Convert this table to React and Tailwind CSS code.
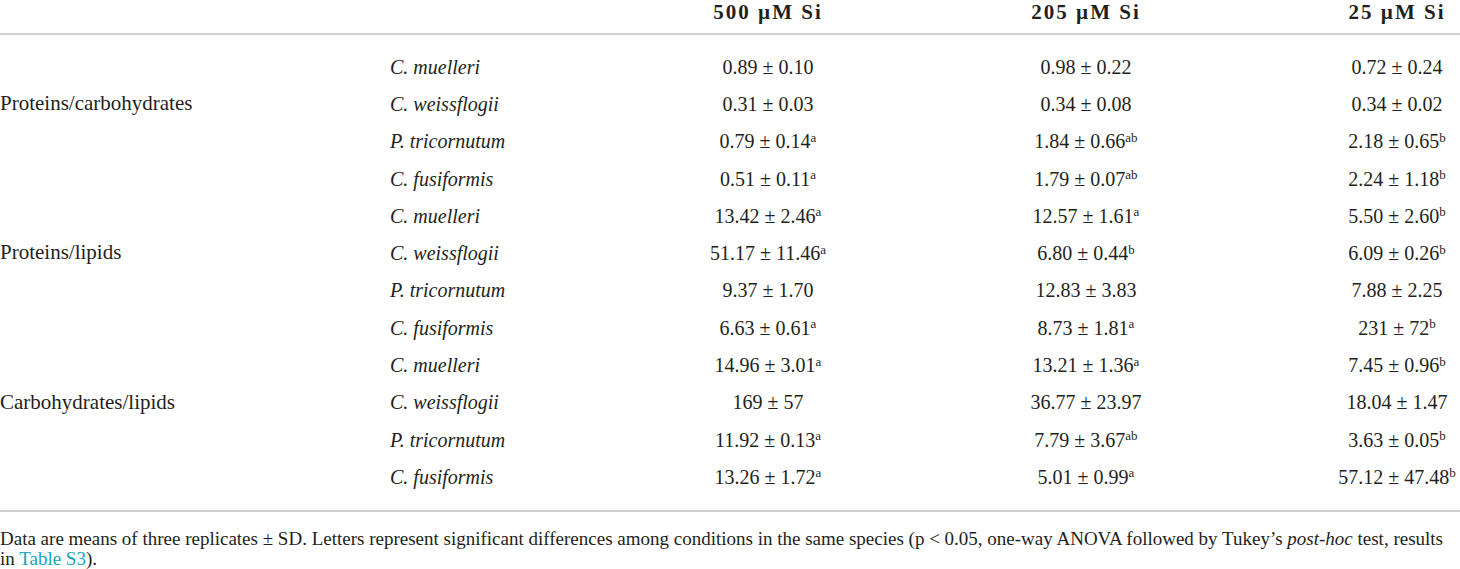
import React from 'react';

const rows = [
  { label: '', species: 'C. muelleri', v: [['0.89 ± 0.10'], ['0.98 ± 0.22'], ['0.72 ± 0.24']] },
  { label: 'Proteins/carbohydrates', species: 'C. weissflogii', v: [['0.31 ± 0.03'], ['0.34 ± 0.08'], ['0.34 ± 0.02']] },
  { label: '', species: 'P. tricornutum', v: [['0.79 ± 0.14', 'a'], ['1.84 ± 0.66', 'ab'], ['2.18 ± 0.65', 'b']] },
  { label: '', species: 'C. fusiformis', v: [['0.51 ± 0.11', 'a'], ['1.79 ± 0.07', 'ab'], ['2.24 ± 1.18', 'b']] },
  { label: '', species: 'C. muelleri', v: [['13.42 ± 2.46', 'a'], ['12.57 ± 1.61', 'a'], ['5.50 ± 2.60', 'b']] },
  { label: 'Proteins/lipids', species: 'C. weissflogii', v: [['51.17 ± 11.46', 'a'], ['6.80 ± 0.44', 'b'], ['6.09 ± 0.26', 'b']] },
  { label: '', species: 'P. tricornutum', v: [['9.37 ± 1.70'], ['12.83 ± 3.83'], ['7.88 ± 2.25']] },
  { label: '', species: 'C. fusiformis', v: [['6.63 ± 0.61', 'a'], ['8.73 ± 1.81', 'a'], ['231 ± 72', 'b']] },
  { label: '', species: 'C. muelleri', v: [['14.96 ± 3.01', 'a'], ['13.21 ± 1.36', 'a'], ['7.45 ± 0.96', 'b']] },
  { label: 'Carbohydrates/lipids', species: 'C. weissflogii', v: [['169 ± 57'], ['36.77 ± 23.97'], ['18.04 ± 1.47']] },
  { label: '', species: 'P. tricornutum', v: [['11.92 ± 0.13', 'a'], ['7.79 ± 3.67', 'ab'], ['3.63 ± 0.05', 'b']] },
  { label: '', species: 'C. fusiformis', v: [['13.26 ± 1.72', 'a'], ['5.01 ± 0.99', 'a'], ['57.12 ± 47.48', 'b']] },
];

const Val = ({ text, sup }) => (
  <>
    {text}
    {sup && <sup className="text-[13px]">{sup}</sup>}
  </>
);

export default function App() {
  return (
    <div className="w-[1460px] h-[569px] bg-white text-[#231f20] overflow-hidden" style={{ fontFamily: '"Liberation Serif", "Times New Roman", serif' }}>
      <table className="w-[1460px] table-fixed border-collapse text-[20px]">
        <colgroup>
          <col className="w-[390px]" />
          <col className="w-[250px]" />
          <col className="w-[256px]" />
          <col className="w-[380px]" />
          <col className="w-[184px]" />
        </colgroup>
        <thead>
          <tr className="h-[34px] border-b-2 border-[#d0d0d0]">
            <th />
            <th />
            <th className="align-top text-center font-bold text-[21px] leading-[24px] tracking-[2px]">500 µM Si</th>
            <th className="align-top text-center font-bold text-[21px] leading-[24px] tracking-[2px]">205 µM Si</th>
            <th className="align-top text-center font-bold text-[21px] leading-[24px] tracking-[2px] pl-[58px] whitespace-nowrap">25 µM Si</th>
          </tr>
        </thead>
        <tbody>
          <tr className="h-[14px]"><td colSpan={5} /></tr>
          {rows.map((r, i) => (
            <tr key={i} className="h-[37.3px]">
              <td className="text-left text-[21px]">{r.label}</td>
              <td className="text-left italic">{r.species}</td>
              <td className="text-center whitespace-nowrap"><Val text={r.v[0][0]} sup={r.v[0][1]} /></td>
              <td className="text-center whitespace-nowrap"><Val text={r.v[1][0]} sup={r.v[1][1]} /></td>
              <td className="text-center pl-[58px] whitespace-nowrap"><Val text={r.v[2][0]} sup={r.v[2][1]} /></td>
            </tr>
          ))}
          <tr className="h-[15px] border-b-2 border-[#d0d0d0]"><td colSpan={5} /></tr>
        </tbody>
      </table>
      <p className="text-[19px] leading-[20px] pt-[17px]">
        Data are means of three replicates ± SD. Letters represent significant differences among conditions in the same species (p &lt; 0.05, one-way ANOVA followed by Tukey’s <i>post-hoc</i> test, results in <span className="text-[#1aa3bd]">Table S3</span>).
      </p>
    </div>
  );
}
